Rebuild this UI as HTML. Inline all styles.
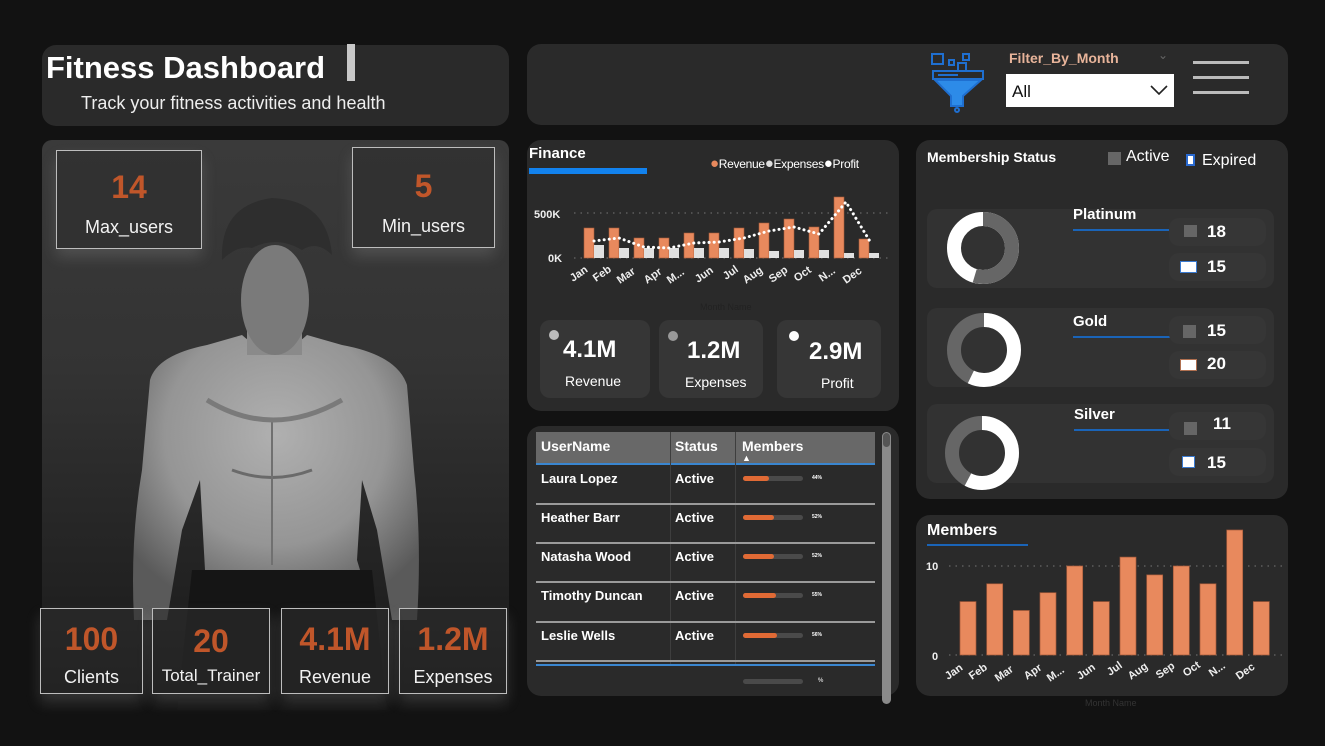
<!DOCTYPE html>
<html><head><meta charset="utf-8"><style>
*{margin:0;padding:0;box-sizing:border-box}
body{width:1325px;height:746px;background:#121212;font-family:"Liberation Sans",sans-serif;color:#fff;position:relative;overflow:hidden}
.p{position:absolute;background:#2a2a2a;border-radius:14px}
.a{position:absolute}
.kb{position:absolute;border:1.5px solid #bdbdbd;background:rgba(45,45,45,.6);text-align:center;box-shadow:0 8px 14px rgba(200,200,200,.18)}
.kb .v{color:#c0562a;font-weight:bold;font-size:32px}
.kb .l{font-size:18px;color:#f2f2f2}
.mini{position:absolute;background:#363636;border-radius:10px}
.row{position:absolute;left:536px;width:339px;height:39px;border-bottom:2px solid #9a9a9a;font-weight:bold;font-size:13px}
.bar{position:absolute;height:5px;border-radius:3px;background:#4a4a4a}
</style></head><body>

<!-- Header -->
<div class="p" style="left:42px;top:45px;width:467px;height:81px"></div>
<div class="a" style="left:46px;top:50px;font-size:31px;font-weight:bold">Fitness Dashboard</div>
<div class="a" style="left:347px;top:44px;width:8px;height:37px;background:#c8c8c8"></div>
<div class="a" style="left:81px;top:93px;font-size:18px;color:#eee">Track your fitness activities and health</div>

<div class="p" style="left:527px;top:44px;width:761px;height:81px"></div>
<svg class="a" style="left:928px;top:50px" width="60" height="64" viewBox="0 0 60 64">
<g fill="none" stroke="#1f6fd0" stroke-width="2"><rect x="4" y="4" width="11" height="10"/><rect x="21" y="10" width="5" height="5"/><rect x="35" y="4" width="6" height="6"/><rect x="30" y="13" width="8" height="8"/><rect x="5" y="21" width="50" height="8"/><circle cx="29" cy="60" r="2"/></g>
<path d="M7 30 H53 L35 46 V56 H23 V46 Z" fill="#2d8be8" stroke="#1f6fd0" stroke-width="2"/>
<rect x="10" y="24" width="20" height="2" fill="#1f6fd0"/>
</svg>
<div class="a" style="left:1009px;top:50px;font-size:14px;font-weight:bold;color:#e8b49a">Filter_By_Month</div>
<div class="a" style="left:1158px;top:48px;font-size:12px;color:#666">&#8964;</div>
<div class="a" style="left:1006px;top:74px;width:168px;height:33px;background:#fff;color:#111;font-size:17px;padding:8px 6px">All
<svg style="position:absolute;right:6px;top:11px" width="18" height="10"><path d="M1 1 L9 9 L17 1" stroke="#222" stroke-width="1.6" fill="none"/></svg></div>
<div class="a" style="left:1193px;top:61px;width:56px;height:3px;background:#bbb"></div>
<div class="a" style="left:1193px;top:76px;width:56px;height:3px;background:#bbb"></div>
<div class="a" style="left:1193px;top:91px;width:56px;height:3px;background:#bbb"></div>

<!-- Image panel -->
<div class="a" style="left:42px;top:140px;width:467px;height:575px;border-radius:10px 10px 0 0;background:linear-gradient(#3a3a3a,#333 40%,#1e1e1e 85%,#121212)"></div>
<svg class="a" style="left:42px;top:140px" width="467" height="570" viewBox="0 0 467 570">
<defs><radialGradient id="sk" cx=".5" cy=".35" r=".65"><stop offset="0" stop-color="#b0b0b0"/><stop offset=".6" stop-color="#959595"/><stop offset="1" stop-color="#5a5a5a"/></radialGradient></defs>
<path d="M108 240 Q115 215 165 205 L200 195 Q233 225 265 195 L300 205 Q355 215 365 245 L372 330 Q380 400 375 480 L350 480 L335 390 L320 340 L315 420 L318 430 L163 430 L158 340 L140 390 L125 480 L92 480 Q88 400 100 330 Z" fill="url(#sk)"/>
<rect x="205" y="170" width="55" height="45" fill="#8a8a8a"/>
<ellipse cx="233" cy="160" rx="34" ry="55" fill="#7a7a7a"/>
<path d="M180 120 Q178 65 230 58 Q285 60 290 115 Q275 100 260 110 Q235 95 210 108 Q195 105 180 120Z" fill="#2e2e2e"/>
<path d="M150 430 L330 430 L345 570 L135 570 Z" fill="#151515"/>
<path d="M190 330 Q230 345 270 330" stroke="#6a6a6a" stroke-width="3" fill="none"/>
<line x1="230" y1="280" x2="230" y2="425" stroke="#707070" stroke-width="2"/>
<path d="M165 260 Q230 300 300 260" stroke="#7a7a7a" stroke-width="5" fill="none"/>
</svg>
<div class="kb" style="left:56px;top:150px;width:146px;height:99px"><div class="v" style="margin-top:18px">14</div><div class="l" style="margin-top:11px">Max_users</div></div>
<div class="kb" style="left:352px;top:147px;width:143px;height:101px"><div class="v" style="margin-top:20px">5</div><div class="l" style="margin-top:11px">Min_users</div></div>
<div class="kb" style="left:40px;top:608px;width:103px;height:86px"><div class="v" style="margin-top:12px">100</div><div class="l" style="margin-top:9px">Clients</div></div>
<div class="kb" style="left:152px;top:608px;width:118px;height:86px"><div class="v" style="margin-top:14px">20</div><div class="l" style="margin-top:6px;font-size:17px">Total_Trainer</div></div>
<div class="kb" style="left:281px;top:608px;width:108px;height:86px"><div class="v" style="margin-top:12px">4.1M</div><div class="l" style="margin-top:9px">Revenue</div></div>
<div class="kb" style="left:399px;top:608px;width:108px;height:86px"><div class="v" style="margin-top:12px">1.2M</div><div class="l" style="margin-top:9px">Expenses</div></div>

<!-- Finance -->
<div class="p" style="left:527px;top:140px;width:372px;height:271px"></div>
<div class="a" style="left:529px;top:145px;font-size:15px;font-weight:bold">Finance</div>
<div class="a" style="left:529px;top:168px;width:118px;height:6px;background:#1282ee"></div>
<div class="a" style="left:710px;top:155px;font-size:12px;white-space:nowrap;letter-spacing:-.3px"><span style="color:#e8895d;font-size:15px">●</span>Revenue<span style="color:#ddd;font-size:15px">●</span>Expenses<span style="font-size:15px">●</span>Profit</div>
<svg class="a" style="left:527px;top:140px" width="372" height="180" viewBox="527 140 372 180">
<g font-size="11" font-weight="bold" fill="#eee"><text x="534" y="218">500K</text><text x="548" y="262">0K</text></g>
<line x1="574" y1="213" x2="890" y2="213" stroke="#777" stroke-dasharray="1.5 5"/>
<line x1="574" y1="258" x2="890" y2="258" stroke="#777" stroke-dasharray="1.5 5"/>
<g fill="#e8895d" stroke="#a55a3a" stroke-width=".6">
<rect x="584" y="228" width="10" height="30"/><rect x="609" y="228" width="10" height="30"/><rect x="634" y="238" width="10" height="20"/><rect x="659" y="238" width="10" height="20"/><rect x="684" y="233" width="10" height="25"/><rect x="709" y="233" width="10" height="25"/><rect x="734" y="228" width="10" height="30"/><rect x="759" y="223" width="10" height="35"/><rect x="784" y="219" width="10" height="39"/><rect x="809" y="227" width="10" height="31"/><rect x="834" y="197" width="10" height="61"/><rect x="859" y="239" width="10" height="19"/></g>
<g fill="#e0e0e0">
<rect x="594" y="245" width="10" height="13"/><rect x="619" y="248" width="10" height="10"/><rect x="644" y="248" width="10" height="10"/><rect x="669" y="248" width="10" height="10"/><rect x="694" y="248" width="10" height="10"/><rect x="719" y="248" width="10" height="10"/><rect x="744" y="249" width="10" height="9"/><rect x="769" y="251" width="10" height="7"/><rect x="794" y="250" width="10" height="8"/><rect x="819" y="250" width="10" height="8"/><rect x="844" y="253" width="10" height="5"/><rect x="869" y="253" width="10" height="5"/></g>
<polyline points="594,241 619,238 644,247 669,248 694,243 719,242 744,238 769,231 794,227 819,234 846,202 871,243" fill="none" stroke="#fff" stroke-width="3" stroke-dasharray="0.1 5" stroke-linecap="round"/>
<g font-size="11" font-weight="bold" fill="#eee">
<text transform="translate(573,282) rotate(-35)">Jan</text><text transform="translate(596,282) rotate(-35)">Feb</text><text transform="translate(620,284) rotate(-35)">Mar</text><text transform="translate(647,284) rotate(-35)">Apr</text><text transform="translate(670,284) rotate(-35)">M...</text><text transform="translate(698,283) rotate(-35)">Jun</text><text transform="translate(726,280) rotate(-35)">Jul</text><text transform="translate(746,284) rotate(-35)">Aug</text><text transform="translate(772,283) rotate(-35)">Sep</text><text transform="translate(797,282) rotate(-35)">Oct</text><text transform="translate(822,282) rotate(-35)">N...</text><text transform="translate(846,284) rotate(-35)">Dec</text></g>
<text x="700" y="310" font-size="9" fill="#222">Month Name</text>
</svg>
<div class="mini" style="left:540px;top:320px;width:110px;height:78px"></div>
<div class="mini" style="left:659px;top:320px;width:104px;height:78px"></div>
<div class="mini" style="left:777px;top:320px;width:104px;height:78px"></div>
<div class="a" style="left:549px;top:330px;width:10px;height:10px;border-radius:50%;background:#bbb"></div>
<div class="a" style="left:668px;top:331px;width:10px;height:10px;border-radius:50%;background:#999"></div>
<div class="a" style="left:789px;top:331px;width:10px;height:10px;border-radius:50%;background:#fff"></div>
<div class="a" style="left:563px;top:336px;font-size:24px;font-weight:bold">4.1M</div>
<div class="a" style="left:687px;top:337px;font-size:24px;font-weight:bold">1.2M</div>
<div class="a" style="left:809px;top:338px;font-size:24px;font-weight:bold">2.9M</div>
<div class="a" style="left:565px;top:373px;font-size:14px">Revenue</div>
<div class="a" style="left:685px;top:374px;font-size:14px">Expenses</div>
<div class="a" style="left:821px;top:375px;font-size:14px">Profit</div>

<!-- Table -->
<div class="p" style="left:527px;top:426px;width:372px;height:270px"></div>
<div class="a" style="left:536px;top:432px;width:339px;height:33px;background:#686868;border-bottom:2px solid #3a86d0;font-weight:bold;font-size:14px">
<span class="a" style="left:5px;top:6px">UserName</span><span class="a" style="left:139px;top:6px">Status</span><span class="a" style="left:206px;top:6px">Members</span>
<span class="a" style="left:206px;top:21px;font-size:9px">▲</span></div>
<div class="a" style="left:670px;top:432px;width:1px;height:232px;background:#3e3e3e"></div>
<div class="a" style="left:735px;top:432px;width:1px;height:232px;background:#3e3e3e"></div>
<div class="row" style="top:466px"><span class="a" style="left:5px;top:5px">Laura Lopez</span><span class="a" style="left:139px;top:5px">Active</span><div class="bar" style="left:207px;top:10px;width:60px"><div style="width:26px;height:5px;border-radius:3px;background:#e06a35"></div></div><span class="a" style="left:276px;top:9px;font-size:5px">44%</span></div>
<div class="row" style="top:505px"><span class="a" style="left:5px;top:5px">Heather Barr</span><span class="a" style="left:139px;top:5px">Active</span><div class="bar" style="left:207px;top:10px;width:60px"><div style="width:31px;height:5px;border-radius:3px;background:#e06a35"></div></div><span class="a" style="left:276px;top:9px;font-size:5px">52%</span></div>
<div class="row" style="top:544px"><span class="a" style="left:5px;top:5px">Natasha Wood</span><span class="a" style="left:139px;top:5px">Active</span><div class="bar" style="left:207px;top:10px;width:60px"><div style="width:31px;height:5px;border-radius:3px;background:#e06a35"></div></div><span class="a" style="left:276px;top:9px;font-size:5px">52%</span></div>
<div class="row" style="top:584px"><span class="a" style="left:5px;top:4px">Timothy Duncan</span><span class="a" style="left:139px;top:4px">Active</span><div class="bar" style="left:207px;top:9px;width:60px"><div style="width:33px;height:5px;border-radius:3px;background:#e06a35"></div></div><span class="a" style="left:276px;top:8px;font-size:5px">55%</span></div>
<div class="row" style="top:623px"><span class="a" style="left:5px;top:5px">Leslie Wells</span><span class="a" style="left:139px;top:5px">Active</span><div class="bar" style="left:207px;top:10px;width:60px"><div style="width:34px;height:5px;border-radius:3px;background:#e06a35"></div></div><span class="a" style="left:276px;top:9px;font-size:5px">56%</span></div>
<div class="a" style="left:536px;top:664px;width:339px;height:2px;background:#3a86d0"></div>
<div class="bar" style="left:743px;top:679px;width:60px"></div>
<div class="a" style="left:818px;top:678px;font-size:6px">%</div>
<div class="a" style="left:882px;top:432px;width:9px;height:272px;border-radius:5px;background:#8a8a8a"></div>
<div class="a" style="left:883px;top:433px;width:7px;height:14px;border-radius:4px;background:#555"></div>

<!-- Membership -->
<div class="p" style="left:916px;top:140px;width:372px;height:359px"></div>
<div class="a" style="left:927px;top:149px;font-size:14px;font-weight:bold">Membership Status</div>
<div class="a" style="left:1108px;top:152px;width:13px;height:13px;background:#666"></div>
<div class="a" style="left:1126px;top:148px;font-size:16px">Active</div>
<div class="a" style="left:1186px;top:154px;width:9px;height:12px;background:#fff;border:2px solid #2a6ad0"></div>
<div class="a" style="left:1202px;top:152px;font-size:16px">Expired</div>

<div class="a" style="left:927px;top:209px;width:347px;height:79px;background:#323232;border-radius:10px"></div>
<div class="a" style="left:927px;top:308px;width:347px;height:79px;background:#323232;border-radius:10px"></div>
<div class="a" style="left:927px;top:404px;width:347px;height:79px;background:#323232;border-radius:10px"></div>
<svg class="a" style="left:910px;top:140px" width="380" height="360" viewBox="910 140 380 360">
<g fill="none" stroke-width="14">
<circle cx="983" cy="248" r="29" stroke="#fff"/>
<circle cx="983" cy="248" r="29" stroke="#666" stroke-dasharray="99.4 200" transform="rotate(-90 983 248)"/>
<circle cx="984" cy="350" r="30" stroke="#666"/>
<circle cx="984" cy="350" r="30" stroke="#fff" stroke-dasharray="107.7 200" transform="rotate(-90 984 350)"/>
<circle cx="982" cy="453" r="30" stroke="#666"/>
<circle cx="982" cy="453" r="30" stroke="#fff" stroke-dasharray="108.7 200" transform="rotate(-90 982 453)"/>
</g></svg>
<div class="a" style="left:1073px;top:206px;font-size:15px;font-weight:bold">Platinum</div>
<div class="a" style="left:1073px;top:313px;font-size:15px;font-weight:bold">Gold</div>
<div class="a" style="left:1074px;top:406px;font-size:15px;font-weight:bold">Silver</div>
<div class="a" style="left:1073px;top:229px;width:104px;height:2px;background:#1a64b8"></div>
<div class="a" style="left:1073px;top:336px;width:104px;height:2px;background:#1a64b8"></div>
<div class="a" style="left:1074px;top:429px;width:104px;height:2px;background:#1a64b8"></div>

<div class="mini" style="left:1169px;top:218px;width:97px;height:28px"></div>
<div class="mini" style="left:1169px;top:253px;width:97px;height:28px"></div>
<div class="mini" style="left:1169px;top:316px;width:97px;height:28px"></div>
<div class="mini" style="left:1169px;top:351px;width:97px;height:28px"></div>
<div class="mini" style="left:1169px;top:412px;width:97px;height:28px"></div>
<div class="mini" style="left:1169px;top:448px;width:97px;height:28px"></div>
<div class="a" style="left:1184px;top:225px;width:13px;height:12px;background:#666"></div>
<div class="a" style="left:1180px;top:261px;width:17px;height:12px;background:#fff;border:1.5px solid #3a7ad0"></div>
<div class="a" style="left:1183px;top:325px;width:13px;height:13px;background:#666"></div>
<div class="a" style="left:1180px;top:359px;width:17px;height:12px;background:#fff;border:1px solid #b07050"></div>
<div class="a" style="left:1184px;top:422px;width:13px;height:13px;background:#666"></div>
<div class="a" style="left:1182px;top:456px;width:13px;height:12px;background:#fff;border:1.5px solid #3a7ad0"></div>
<div class="a" style="left:1207px;top:222px;font-size:17px;font-weight:bold">18</div>
<div class="a" style="left:1207px;top:257px;font-size:17px;font-weight:bold">15</div>
<div class="a" style="left:1207px;top:321px;font-size:17px;font-weight:bold">15</div>
<div class="a" style="left:1207px;top:354px;font-size:17px;font-weight:bold">20</div>
<div class="a" style="left:1213px;top:414px;font-size:17px;font-weight:bold">11</div>
<div class="a" style="left:1207px;top:453px;font-size:17px;font-weight:bold">15</div>

<!-- Members chart -->
<div class="p" style="left:916px;top:515px;width:372px;height:181px"></div>
<div class="a" style="left:927px;top:522px;font-size:16px;font-weight:bold">Members</div>
<div class="a" style="left:927px;top:544px;width:101px;height:2px;background:#1a64b8"></div>
<svg class="a" style="left:910px;top:510px" width="380" height="200" viewBox="910 510 380 200">
<g font-size="11" font-weight="bold" fill="#eee"><text x="926" y="570">10</text><text x="932" y="660">0</text></g>
<line x1="949" y1="566" x2="1285" y2="566" stroke="#777" stroke-dasharray="1.5 5"/>
<line x1="949" y1="655" x2="1285" y2="655" stroke="#777" stroke-dasharray="1.5 5"/>
<g fill="#e8895d" stroke="#a55a3a" stroke-width=".7">
<rect x="960" y="601.6" width="16" height="53.4"/><rect x="986.7" y="583.8" width="16" height="71.2"/><rect x="1013.3" y="610.5" width="16" height="44.5"/><rect x="1040" y="592.7" width="16" height="62.3"/><rect x="1066.7" y="566" width="16" height="89"/><rect x="1093.3" y="601.6" width="16" height="53.4"/><rect x="1120" y="557.1" width="16" height="97.9"/><rect x="1146.7" y="574.9" width="16" height="80.1"/><rect x="1173.3" y="566" width="16" height="89"/><rect x="1200" y="583.8" width="16" height="71.2"/><rect x="1226.7" y="530" width="16" height="125"/><rect x="1253.3" y="601.6" width="16" height="53.4"/></g>
<g font-size="11" font-weight="bold" fill="#eee">
<text transform="translate(948,680) rotate(-35)">Jan</text><text transform="translate(972,680) rotate(-35)">Feb</text><text transform="translate(998,682) rotate(-35)">Mar</text><text transform="translate(1027,680) rotate(-35)">Apr</text><text transform="translate(1050,682) rotate(-35)">M...</text><text transform="translate(1080,680) rotate(-35)">Jun</text><text transform="translate(1110,676) rotate(-35)">Jul</text><text transform="translate(1131,680) rotate(-35)">Aug</text><text transform="translate(1159,679) rotate(-35)">Sep</text><text transform="translate(1186,677) rotate(-35)">Oct</text><text transform="translate(1212,677) rotate(-35)">N...</text><text transform="translate(1239,680) rotate(-35)">Dec</text></g>
<text x="1085" y="706" font-size="9" fill="#333">Month Name</text>
</svg>
</body></html>
